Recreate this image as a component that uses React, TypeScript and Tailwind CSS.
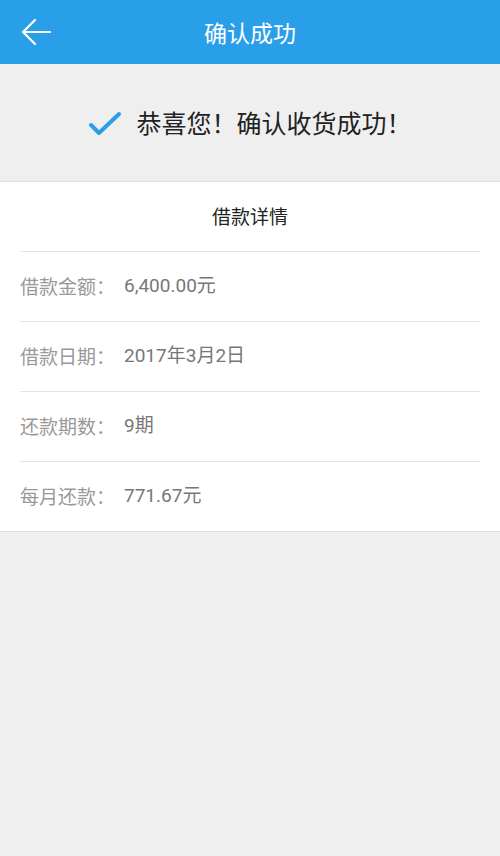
const rows = [
  { label: "借款金额：", value: "6,400.00元" },
  { label: "借款日期：", value: "2017年3月2日" },
  { label: "还款期数：", value: "9期" },
  { label: "每月还款：", value: "771.67元" },
];

export default function App() {
  return (
    <div
      className="min-h-[856px] bg-[#efefef]"
      style={{ fontFamily: '"Noto Sans CJK SC", "Noto Sans", sans-serif' }}
    >
      <header className="relative flex h-16 items-center justify-center bg-[#2a9fe9]">
        <button className="absolute left-[20px] top-[17px]">
          <svg width="32" height="30" viewBox="0 0 32 30" fill="none" stroke="white" strokeWidth="2.2" strokeLinecap="round" strokeLinejoin="round">
            <path d="M30 15H3M15 3L3 15l12 12" />
          </svg>
        </button>
        <h1 className="text-[23px] text-white">确认成功</h1>
      </header>

      <div className="flex h-[118px] items-center justify-center border-b border-[#dcdcdc]">
        <svg width="34" height="26" viewBox="0 0 34 26" fill="none" stroke="#2a9fe9" strokeWidth="4" strokeLinecap="round" strokeLinejoin="round" className="mr-[14px] mt-[2px]">
          <path d="M3 14l8 8L31 3" />
        </svg>
        <span className="text-[25px] text-[#222]">恭喜您！确认收货成功！</span>
      </div>

      <div className="border-b border-[#dcdcdc] bg-white px-[20px]">
        <div className="flex h-[69px] items-center justify-center text-[19px] text-[#222]">借款详情</div>
        {rows.map((r) => (
          <div key={r.label} className="flex h-[70px] items-center border-t border-[#e4e4e4] text-[19px]">
            <span className="w-[104px] text-[#999]">{r.label}</span>
            <span className="font-['Roboto','Noto_Sans_CJK_SC',sans-serif] text-[#777]">{r.value}</span>
          </div>
        ))}
      </div>
    </div>
  );
}
